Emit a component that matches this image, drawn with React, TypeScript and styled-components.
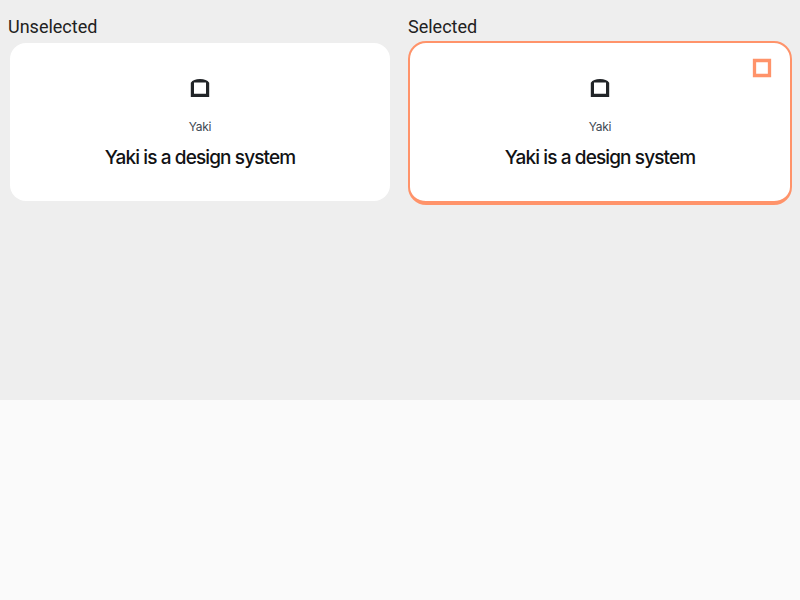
import React from "react";
import styled, { createGlobalStyle } from "styled-components";

const GlobalStyle = createGlobalStyle`
  body { margin: 0; background: #fafafa; }
  * { box-sizing: border-box; }
`;
const Board = styled.main`
  display: grid;
  grid-template-columns: 1fr 1fr;
  align-items: start;
  height: 400px;
  padding: 16px 8px 0;
  column-gap: 16px;
  background: #eeeeee;
`;
const Column = styled.section`
  display: flex;
  flex-direction: column;
`;
const Label = styled.div`
  height: 25px;
  font: 400 18px/21px Roboto, sans-serif;
  color: #212121;
`;
const Card = styled.div<{ $selected?: boolean }>`
  position: relative;
  display: flex;
  flex-direction: column;
  align-items: center;
  height: ${(p) => (p.$selected ? 164 : 162)}px;
  padding-top: 32px;
  border: 2px solid ${(p) => (p.$selected ? "#ff936a" : "transparent")};
  border-bottom-width: ${(p) => (p.$selected ? 4 : 2)}px;
  border-radius: 18px;
  background: #fff;
  background-clip: padding-box;
`;
const Glyph = styled.svg`
  display: block;
  width: 24px;
  height: 24px;
`;
const Corner = styled.svg`
  position: absolute;
  top: 13px;
  right: 16px;
  width: 24px;
  height: 24px;
`;
const Caption = styled.div`
  margin-top: 18px;
  font: 400 12px/20px Inter, sans-serif;
  letter-spacing: -0.3px;
  color: #3d4852;
`;
const Title = styled.div`
  margin-top: 8px;
  font: 500 19px/26px Inter, sans-serif;
  letter-spacing: -0.88px;
  color: #111214;
`;

function YakiCard({ selected }: { selected?: boolean }) {
  return (
    <Card $selected={selected}>
      {selected && (
        <Corner viewBox="0 0 24 24" fill="none" stroke="#ff936a" strokeWidth="3.3">
          <path d="M4.5 4.5h15v15h-15z" />
        </Corner>
      )}
      <Glyph viewBox="0 0 24 24">
        <path
          fill="#212427"
          fillRule="evenodd"
          d="M2.8 22V7.8C4.6 5.2 7.6 4 12 4s7.4 1.2 9.2 3.8V22zM6 7.6v11.2h12V7.6z"
        />
      </Glyph>
      <Caption>Yaki</Caption>
      <Title>Yaki is a design system</Title>
    </Card>
  );
}

export default function App() {
  return (
    <>
      <GlobalStyle />
      <Board>
        <Column><Label>Unselected</Label><YakiCard /></Column>
        <Column><Label>Selected</Label><YakiCard selected /></Column>
      </Board>
    </>
  );
}
